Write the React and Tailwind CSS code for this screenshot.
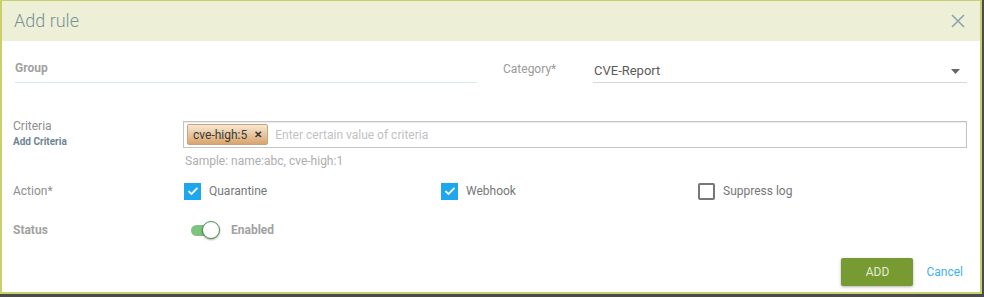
import React from "react";

function Check({ checked }) {
  if (checked) {
    return (
      <span className="w-[17px] h-[17px] bg-[#1ea6ef] flex items-center justify-center shrink-0">
        <svg width="12" height="10" viewBox="0 0 12 10">
          <path d="M1.5 5.2 L4.5 8 L10.5 1.8" stroke="white" strokeWidth="1.8" fill="none" />
        </svg>
      </span>
    );
  }
  return <span className="w-[17px] h-[17px] border-2 border-[#777] rounded-[2px] shrink-0 box-border" />;
}

export default function App() {
  return (
    <div className="w-[984px] h-[297px] bg-[#4b4b4b] font-['Roboto',sans-serif]">
      <div className="w-[982px] h-[294px] bg-white border-t border-l-2 border-r-2 border-b-2 border-[#c7d06c] box-border flex flex-col">
        {/* header */}
        <div className="h-[40px] bg-[#edf0d7] flex items-center justify-between pl-[12px] pr-[15px] shrink-0">
          <span className="text-[18px] font-light text-[#7b9199] leading-none">Add rule</span>
          <svg width="14" height="14" viewBox="0 0 14 14">
            <path d="M1 1 L13 13 M13 1 L1 13" stroke="#8ea3ad" strokeWidth="1.6" />
          </svg>
        </div>
        {/* body */}
        <div className="flex flex-col pl-[11px] pr-[11px]">
          {/* row 1 */}
          <div className="flex mt-[14px] h-[28px]">
            <div className="ml-[2px] w-[462px] border-b border-[#dce6ef] pt-0">
              <span className="text-[12px] font-bold text-[#a2a2a2] leading-[16px]">Group</span>
            </div>
            <div className="ml-[26px] w-[90px] pt-[1px]">
              <span className="text-[12px] text-[#9a9a9a] leading-[16px]">Category*</span>
            </div>
            <div className="w-[374px] border-b border-[#d8d8d8] flex items-start justify-between pt-[8px] pl-[1px] pr-[7px]">
              <span className="text-[13px] text-[#5b5b5b] leading-[16px]">CVE-Report</span>
              <svg width="9" height="5" viewBox="0 0 9 5" className="mt-[6px]">
                <path d="M0 0 L9 0 L4.5 5 Z" fill="#666" />
              </svg>
            </div>
          </div>
          {/* criteria row */}
          <div className="flex mt-[38px]">
            <div className="w-[170px] flex flex-col -mt-[2px]">
              <span className="text-[12px] text-[#8e8e8e] leading-[14px]">Criteria</span>
              <span className="text-[10px] font-bold text-[#6c8593] leading-[12px] mt-[3px]">Add Criteria</span>
            </div>
            <div className="flex flex-col">
              <div className="w-[784px] h-[27px] border border-[#c4c4c4] shadow-[inset_0_1px_1px_rgba(0,0,0,0.08)] flex items-center pl-[3px]">
                <span className="h-[21px] px-[5px] rounded-[2px] border border-[#c9a47c] bg-gradient-to-b from-[#f7e8d2] to-[#d8a56c] flex items-center gap-[7px] text-[12px] text-[#3a3a3a]">
                  <span>cve-high:5</span>
                  <span className="text-[10px] font-bold text-[#333]">✕</span>
                </span>
                <span className="ml-[7px] text-[12px] text-[#c2c2c2]">Enter certain value of criteria</span>
              </div>
              <span className="text-[12px] text-[#aeaeae] mt-[5px] ml-[2px] leading-[16px]">Sample: name:abc, cve-high:1</span>
            </div>
          </div>
          {/* action row */}
          <div className="flex items-center mt-[13px] h-[18px]">
            <span className="w-[171px] text-[12px] text-[#8e8e8e]">Action*</span>
            <div className="w-[257px] flex items-center gap-[8px]">
              <Check checked />
              <span className="text-[12px] text-[#777]">Quarantine</span>
            </div>
            <div className="w-[257px] flex items-center gap-[8px]">
              <Check checked />
              <span className="text-[12px] text-[#777]">Webhook</span>
            </div>
            <div className="flex items-center gap-[8px]">
              <Check />
              <span className="text-[12px] text-[#777]">Suppress log</span>
            </div>
          </div>
          {/* status row */}
          <div className="flex items-center mt-[20px] h-[20px]">
            <span className="w-[178px] text-[12px] font-bold text-[#a2a2a2]">Status</span>
            <div className="relative w-[31px] h-[20px] flex items-center">
              <span className="w-[28px] h-[11px] rounded-full bg-[#7cc47f]" />
              <span className="absolute left-[11px] top-[1px] w-[18px] h-[18px] rounded-full bg-white border border-[#4f8f53] shadow-[0_1px_2px_rgba(0,0,0,0.35)]" />
            </div>
            <span className="ml-[9px] text-[12px] font-bold text-[#a2a2a2]">Enabled</span>
          </div>
          {/* buttons */}
          <div className="flex items-center justify-end mt-[18px] pr-[6px]">
            <button className="w-[72px] h-[28px] bg-[#789a33] rounded-[2px] shadow-[0_1px_3px_rgba(0,0,0,0.3)] text-[12px] text-[#e3ecd2]">ADD</button>
            <span className="ml-[13px] text-[12px] text-[#42b1ef]">Cancel</span>
          </div>
        </div>
      </div>
    </div>
  );
}
